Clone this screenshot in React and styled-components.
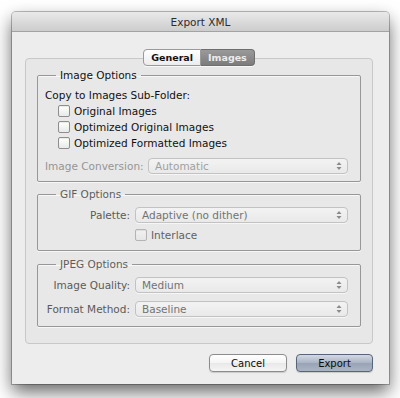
import styled, { createGlobalStyle } from 'styled-components'

const GlobalStyle = createGlobalStyle`
    html, body {
        margin: 0;
        padding: 0;
        background: #ffffff;
    }
    body {
        font-family: 'DejaVu Sans', 'Liberation Sans', sans-serif;
        font-size: 10.5px;
        color: #111111;
    }
`

export default function App() {
    return (
        <>
            <GlobalStyle />
            <Page>
                <Window>
                    <TitleBar>Export XML</TitleBar>
                    <WindowBody>
                        <TabBar>
                            <Tab>General</Tab>
                            <Tab active>Images</Tab>
                        </TabBar>
                        <TabPanel>
                            <Group>
                                <Legend>Image Options</Legend>
                                <Line>Copy to Images Sub-Folder:</Line>
                                <CheckRow indent="13px">
                                    <CheckBox />
                                    <span>Original Images</span>
                                </CheckRow>
                                <CheckRow indent="13px">
                                    <CheckBox />
                                    <span>Optimized Original Images</span>
                                </CheckRow>
                                <CheckRow indent="13px">
                                    <CheckBox />
                                    <span>Optimized Formatted Images</span>
                                </CheckRow>
                                <FieldRow labelWidth="98px" align="left" top="7px">
                                    <FieldLabel dim>Image Conversion:</FieldLabel>
                                    <Select value="Automatic" faded />
                                </FieldRow>
                            </Group>

                            <Group pad="6px 12px 7px 7px" spacing="5px">
                                <Legend dim>GIF Options</Legend>
                                <FieldRow labelWidth="85px">
                                    <FieldLabel>Palette:</FieldLabel>
                                    <Select value="Adaptive (no dither)" />
                                </FieldRow>
                                <FieldRow labelWidth="85px" top="4px">
                                    <span />
                                    <CheckRow dim>
                                        <CheckBox dim />
                                        <span>Interlace</span>
                                    </CheckRow>
                                </FieldRow>
                            </Group>

                            <Group pad="6px 12px 9px 7px" spacing="6px">
                                <Legend dim>JPEG Options</Legend>
                                <FieldRow labelWidth="85px">
                                    <FieldLabel>Image Quality:</FieldLabel>
                                    <Select value="Medium" />
                                </FieldRow>
                                <FieldRow labelWidth="85px" top="8px">
                                    <FieldLabel>Format Method:</FieldLabel>
                                    <Select value="Baseline" />
                                </FieldRow>
                            </Group>
                        </TabPanel>
                        <ButtonRow>
                            <Button>Cancel</Button>
                            <Button primary>Export</Button>
                        </ButtonRow>
                    </WindowBody>
                </Window>
            </Page>
        </>
    )
}

function Select(props) {
    const { value, faded } = props
    return (
        <SelectBox faded={faded}>
            <span>{value}</span>
            <svg width="6" height="10" viewBox="0 0 6 10">
                <path d="M3 1 L5.5 4 L0.5 4 Z" fill="#8a8a8a" />
                <path d="M3 9 L5.5 6 L0.5 6 Z" fill="#8a8a8a" />
            </svg>
        </SelectBox>
    )
}

const Page = styled.div`
    width: 400px;
    height: 398px;
    padding: 12px 0 0 12px;
    box-sizing: border-box;
    background: #ffffff;
`

const Window = styled.div`
    width: 377px;
    height: 372px;
    display: flex;
    flex-direction: column;
    background: #ededed;
    box-shadow: 0 0 0 1px rgba(0, 0, 0, 0.25), 0 8px 18px rgba(0, 0, 0, 0.6);
    border-radius: 4px 4px 0 0;
`

const TitleBar = styled.div`
    height: 19px;
    flex: none;
    display: flex;
    align-items: center;
    justify-content: center;
    background: linear-gradient(#e9e9e9, #cdcdcd);
    border-bottom: 1px solid #a3a3a3;
    border-radius: 4px 4px 0 0;
    color: #2c2c2c;
    font-size: 10.5px;
`

const WindowBody = styled.div`
    display: flex;
    flex-direction: column;
    padding: 17px 16px 0 13px;
`

const TabBar = styled.div`
    display: flex;
    justify-content: center;
    margin-bottom: -8px;
    position: relative;
    z-index: 1;
`

const Tab = styled.div`
    height: 15px;
    padding: 0 7px;
    display: flex;
    align-items: center;
    font-size: 9.5px;
    font-weight: bold;
    border: 1px solid ${props => props.active ? '#6e6e6e' : '#9a9a9a'};
    background: ${props => props.active ? 'linear-gradient(#9a9a9a, #7c7c7c)' : 'linear-gradient(#ffffff, #ececec)'};
    color: ${props => props.active ? '#ececec' : '#111111'};
    border-radius: ${props => props.active ? '0 4px 4px 0' : '4px 0 0 4px'};
    ${props => props.active ? 'border-left: none;' : ''}
    box-shadow: 0 1px 0 rgba(255, 255, 255, 0.7);
`

const TabPanel = styled.div`
    display: flex;
    flex-direction: column;
    height: 286px;
    box-sizing: border-box;
    padding: 9px 11px 15px 11px;
    background: #e7e7e7;
    border: 1px solid #c8c8c8;
    border-radius: 4px;
`

const Group = styled.fieldset`
    margin: 0;
    margin-top: ${props => props.spacing || '0'};
    padding: ${props => props.pad || '5px 12px 7px 7px'};
    min-width: 0;
    display: flex;
    flex-direction: column;
    border: 1px solid #979797;
    border-radius: 2px;
    box-shadow: 0 1px 0 #f7f7f7, inset 0 1px 0 #f7f7f7;
    background: #e8e8e8;
`

const Legend = styled.legend`
    margin-left: 11px;
    padding: 0 4px;
    line-height: 14px;
    color: ${props => props.dim ? '#5e5e5e' : '#111111'};
`

const Line = styled.div`
    height: 16px;
    line-height: 16px;
`

const CheckRow = styled.label`
    height: 16px;
    display: flex;
    align-items: center;
    gap: 4px;
    padding-left: ${props => props.indent || '0'};
    color: ${props => props.dim ? '#626262' : '#111111'};
`

const CheckBox = styled.span`
    width: 10px;
    height: 10px;
    flex: none;
    border: 1px solid ${props => props.dim ? '#b4b4b4' : '#8e8e8e'};
    border-radius: 2px;
    background: ${props => props.dim ? 'linear-gradient(#f2f2f2, #e6e6e6)' : 'linear-gradient(#ffffff, #e9e9e9)'};
    box-shadow: inset 0 1px 1px rgba(0, 0, 0, 0.08);
`

const FieldRow = styled.div`
    display: grid;
    grid-template-columns: ${props => props.labelWidth} 1fr;
    column-gap: 5px;
    align-items: center;
    margin-top: ${props => props.top || '0'};
    height: 16px;
    & > *:first-child {
        text-align: ${props => props.align === 'left' ? 'left' : 'right'};
    }
`

const FieldLabel = styled.span`
    white-space: nowrap;
    color: ${props => props.dim ? '#959595' : '#5a5a5a'};
`

const SelectBox = styled.div`
    height: 16px;
    box-sizing: border-box;
    display: flex;
    align-items: center;
    justify-content: space-between;
    padding: 0 5px 0 6px;
    border: 1px solid #c2c2c2;
    border-radius: 4px;
    background: linear-gradient(#f3f3f3, #e9e9e9);
    box-shadow: 0 1px 0 rgba(255, 255, 255, 0.6);
    color: ${props => props.faded ? '#a0a0a0' : '#737373'};
`

const ButtonRow = styled.div`
    display: flex;
    justify-content: flex-end;
    gap: 9px;
    margin-top: 10px;
`

const Button = styled.button`
    width: ${props => props.primary ? '77px' : '78px'};
    height: 18px;
    padding: 0;
    font-family: 'DejaVu Sans', 'Liberation Sans', sans-serif;
    font-size: 10px;
    color: #0c0c0c;
    border: 1px solid ${props => props.primary ? '#58647a' : '#8c8c8c'};
    border-radius: 4px;
    background: ${props => props.primary ? 'linear-gradient(#d3d9e3, #a9b3c3 50%, #98a3b5 51%, #aab4c4)' : 'linear-gradient(#ffffff, #f4f4f4 50%, #e8e8e8 51%, #f5f5f5)'};
    box-shadow: 0 1px 1px rgba(0, 0, 0, 0.15);
`
